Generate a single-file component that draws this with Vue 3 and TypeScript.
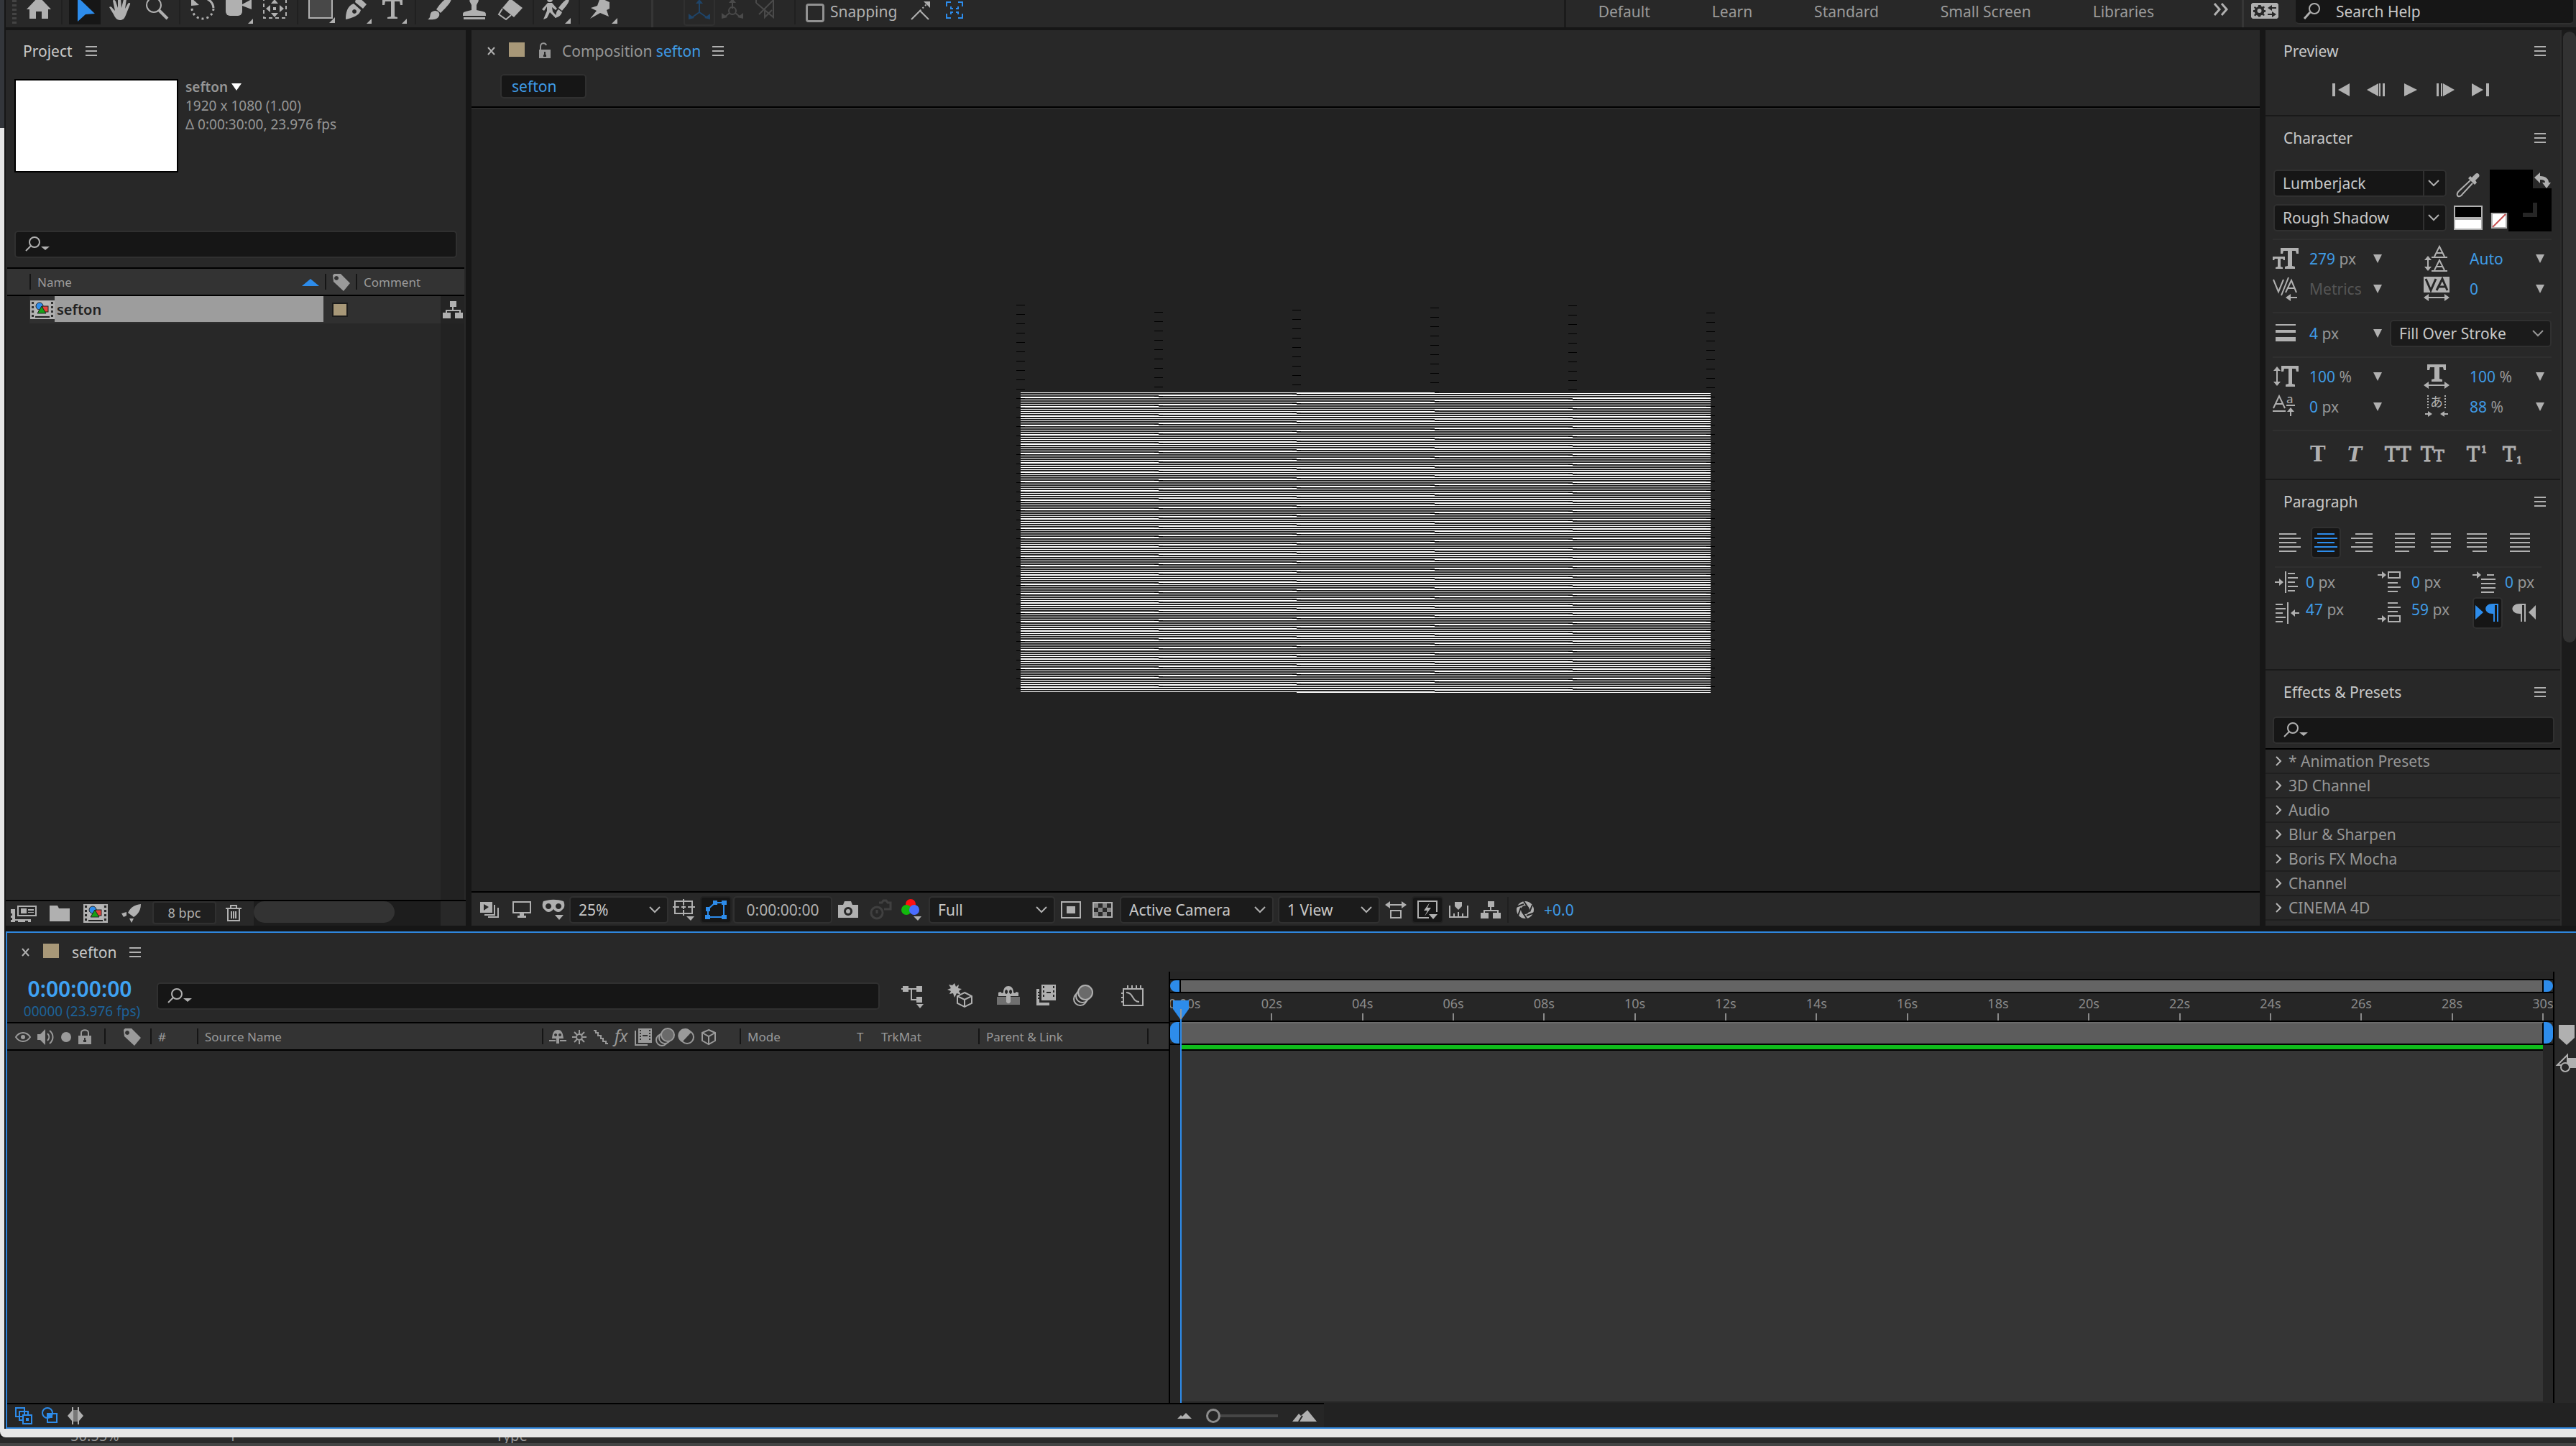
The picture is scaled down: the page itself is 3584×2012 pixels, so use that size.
<script setup lang="ts">
import { h } from 'vue'

type Glyph = [number, number, string]

const S = 'fill="none" stroke="currentColor" stroke-width="2"'
const S3 = 'fill="none" stroke="currentColor" stroke-width="3"'
const serif = 'font-family="DejaVu Serif, serif" font-weight="bold"'
const slab = 'font-family="DejaVu Serif, serif" stroke="currentColor"'
const sans = 'font-family="Noto Sans, sans-serif"'

// Horizontal rules that make up the paragraph alignment glyphs.
const rules = (list: number[][], y0 = 1, step = 6) =>
  list.map(([x, w], i) => `<rect x="${x}" y="${y0 + i * step}" width="${w}" height="2"/>`).join('')

const comp = '<path fill-rule="evenodd" d="M0 0h34v26H0zM2 2v3h3V2zM2 8v3h3V8zM2 14v3h3v-3zM2 20v3h3v-3zM29 2v3h3V2zM29 8v3h3V8zM29 14v3h3v-3zM29 20v3h3v-3z"/><rect x="7" y="1" width="20" height="19" fill="#b8b8b8"/><circle cx="13" cy="8" r="5" fill="#2d8ceb" stroke="#222"/><rect x="17" y="8" width="8" height="8" fill="#e8433c" stroke="#222"/><path d="M16 8l6 10H10z" fill="#18a018" stroke="#222"/><rect x="7" y="22" width="20" height="2" fill="#222"/>'
const film = '<path fill-rule="evenodd" d="M5 0h19v20H5zM7 2v2h2V2zM7 6v2h2V6zM7 10v2h2v-2zM7 14v2h2v-2zM20 2v2h2V2zM20 6v2h2V6zM20 10v2h2v-2zM20 14v2h2v-2zM11 9v2h7V9z"/><path d="M1 3v20h17" fill="none" stroke="currentColor" stroke-width="2"/>'

const glyphs: Record<string, Glyph> = {
  home: [50, 36, '<path d="M25-5 42 13H38V26H29V16H21V26H12V13H8z"/>'],
  arrow: [50, 36, '<path d="M15-4 39 19 26 20 15 30z"/>'],
  hand: [50, 36, '<path d="M9 10c2-2 4 0 5 2l3 3L14 1c1-2 3-1 4 1l3 9 0-13h4l1 13 3-12h4l-2 13 4-7c1-2 4-1 3 1l-6 15c-2 5-4 7-8 7-5 0-7-4-9-8z"/>'],
  zoom: [50, 36, `<circle cx="21" cy="7" r="10" ${S}/><path d="M28 14 40 26" stroke="currentColor" stroke-width="4"/>`],
  rotate: [50, 36, `<path d="M14-2C28-6 39 0 40 11" ${S3}/><path d="M9-3v11l11-1z"/><path d="M40 12A15 15 0 1 1 10 10" ${S3} stroke-dasharray="3 4"/>`],
  camera: [50, 36, `<rect x="7" y="-5" width="23" height="27" rx="6"/><path d="M30 6 43-1V13L30 8z"/><path d="M45 26v7h-7z"/>`],
  anchor: [50, 36, `<path d="M10-4V25H41V-4" ${S} stroke-dasharray="5 4"/><path d="M25 24l-5-6h10zM25-1l-5 6h10zM13 12l6-5v10zM38 12l-6-5v10z"/><rect x="23" y="10" width="4" height="4"/>`],
  rect: [50, 36, '<path d="M9-6h32v31H9z" fill="#484848" stroke="currentColor" stroke-width="2"/><path d="M45 24v8h-8z"/>'],
  pen: [50, 36, `<path fill-rule="evenodd" d="M10 27C10 18 12 8 21 5l10 9c-2 8-12 11-21 13zM22 13a3 3 0 1 0 .1 0z"/><path d="M24-1 28-4 39 6 34 12 23 3z"/><path d="M46 26v7h-7z"/>`],
  type: [50, 36, `<path d="M11-1H39V7H36L35 2H28V23L32 24V26H18V24L23 23V2H15L14 7H11z"/><path d="M45 26v7h-7z"/>`],
  brush: [50, 36, '<path d="M42-3C44 0 42 4 28 18L22 13C31 0 36-3 42-3z"/><path d="M21 15c5 1 6 4 5 7-2 5-9 6-16 5 4-2 3-5 4-8 1-3 4-4 7-4z"/>'],
  stamp: [50, 36, '<path d="M22-4h7l2 5-3 6v7l9 2c4 1 4 2 4 6H9c0-4 0-5 4-6l8-2V7L18 1z"/><rect x="10" y="24" width="30" height="3"/>'],
  eraser: [50, 36, `<path d="M25-2 42 11 30 24 14 11z"/><path d="M14 12 9 20 19 27 26 21" ${S}/>`],
  roto: [50, 36, `<circle cx="16" cy="-1" r="4"/><path d="M13 4h6l7 8-2 2-5-4 1 6 6 7-2 2-8-8-4 8-5 2 5-12V9l-4 6-3-2z"/><path d="M42-2c3 3-3 10-9 17l-5-4c5-7 10-12 14-13zM28 13l5 4c-2 5-5 7-10 8 2-3 1-9 5-12z"/><path d="M45 25v8h-8z"/>`],
  pin: [50, 36, '<path d="M22-3 35 3 35 12 31 14 34 23 22 18 8 26 17 15 9 11 18 8z"/><path d="M46 25v8h-8z"/>'],
  axisA: [30, 36, `<path d="M15 18V4M15 18 5 25M15 18 25 25" ${S}/><path d="M15 0l5 6H10zM0 28v-8l8 6zM30 28v-8l-8 6z"/>`],
  axisB: [30, 36, `<path d="M15 12V0M11 18 5 23M19 18 25 23" ${S}/><circle cx="15" cy="15" r="5" ${S}/><path d="M15-2l5 6H10zM0 26v-8l8 6zM30 26v-8l-8 6z"/>`],
  axisC: [30, 36, `<path d="M2 4 26 24V0L6 20M2 4V-3M14 12v12l10-10" ${S}/>`],
  snap: [30, 36, `<path d="M3 27 15 15 27 27" ${S}/><path d="M15 15 24 6" ${S} stroke-dasharray="2 3"/><path d="M20 2h9v9z"/>`],
  snapBox: [26, 36, `<path d="M2 9V3H8M18 3H24V9M24 19V25H18M8 25H2V19" ${S}/><path d="M8 9v3h3M18 9v3h-3M8 20v-3h3M18 20v-3h-3" ${S}/>`],
  more: [22, 18, `<path d="M2 1l7 8-7 8M12 1l7 8-7 8" ${S3}/>`],
  workspace: [38, 22, '<path fill-rule="evenodd" d="M2 0h34l2 2v18l-2 2H2l-2-2V2zM12 3l-2 0-.5 2.500-2 1L5 5 4 6.500l1.500 2-.7 1.500H3v3h1.800l.7 2L4 17l1.500 1.500 2-1.500 2 1 .5 1.500h3l.5-2 2-.7 1.500 1.200L19 17l-1.500-2 .7-2H20v-3h-1.800l-.7-2L19 6l-1.500-1.500-2 1-1.500-.7L13.500 3zM11.500 8a3 3 0 1 1 0 6 3 3 0 0 1 0-6zM29 3l-6 4 6 4V8h6V6h-6zM29 12v3h-6v2h6v3l6-4z"/>'],
  search: [26, 24, `<circle cx="16" cy="8" r="7" ${S}/><path d="M10 13 2 22" stroke="currentColor" stroke-width="3"/>`],
  find: [34, 22, `<ellipse cx="13" cy="8" rx="7" ry="7" ${S}/><path d="M8 13 1 20" ${S}/><path d="M22 14h12l-6 5z"/>`],
  menu: [16, 14, '<path d="M0 0h16v2H0zM0 6h16v2H0zM0 12h16v2H0z"/>'],
  close: [12, 12, `<path d="M1 1 10 11M10 1 1 11" ${S}/>`],
  unlock: [18, 22, `<path fill-rule="evenodd" d="M2 9h16v12H2zM9 12v4h-1v3h4v-3h-1v-4z"/><path d="M4 9V5c0-6 7-6 8-2" ${S}/>`],
  lock: [20, 22, `<path fill-rule="evenodd" d="M1 9h18v12H1zM9 12v3h-1v3h4v-3h-1v-3z"/><path d="M5 9V5c0-5 10-5 10 0v4" ${S}/>`],
  caret: [14, 10, '<path d="M0 0h14L7 10z"/>'],
  up: [24, 10, '<path d="M12 0 24 10H0z"/>'],
  drop: [14, 12, '<path d="M1 0h12L7 12z"/>'],
  chevron: [16, 10, `<path d="M1 1 8 8 15 1" ${S}/>`],
  twisty: [8, 14, `<path d="M1 1 7 7 1 13" ${S}/>`],
  tag: [24, 24, '<path fill-rule="evenodd" d="M0 2 2 0h9l13 13-9 11L1 11zM5 3a3 3 0 1 0 .1 0z"/>'],
  comp: [34, 26, comp],
  flow: [28, 24, '<path d="M10 0h9v8h-4v4h10v4h3v8H17v-8h6v-2H6v2h5v8H0v-8h4v-4h9V8h-3z"/>'],
  interpret: [36, 24, `<path fill-rule="evenodd" d="M9 1h27v15H9zM11 3v11h23V3zM14 5h8v7h-8zM24 6h8v2h-8zM24 10h8v1h-8z"/><path d="M0 6h6v14h22v4h-4v-2h-4v2H10v-2H6v2H0v-3h2v-3H0v-3h2v-3H0z"/>`],
  folder: [28, 22, '<path d="M0 0h11l2 4h15v18H0z"/>'],
  rocket: [28, 26, '<path d="M27 0c0 9-4 14-10 18L9 12C13 4 18 1 27 0zM7 11 0 13l3 5 4-2zM17 20l-3 6-3-6z"/>'],
  trash: [22, 24, `<path d="M0 5h22M7 4V1h8v3M3 5v17h16V5M8 9v10M11 9v10M14 9v10" ${S}/>`],
  first: [26, 18, '<path d="M0 0h4v18H0zM24 0v18L8 9z"/>'],
  back: [26, 18, '<path d="M16 0v18L0 9zM17 0h2v18h-2zM22 0h3v18h-3z"/>'],
  play: [20, 18, '<path d="M1 0 19 9 1 18z"/>'],
  fwd: [26, 18, '<path d="M10 0v18l16-9zM7 0h2v18H7zM1 0h3v18H1z"/>'],
  last: [26, 18, '<path d="M22 0h4v18h-4zM2 0v18l16-9z"/>'],
  dropper: [34, 34, `<path d="M22 7 27 2c3-3 7 1 5 4l-5 5 2 3-3 3-9-9 3-3z"/><path d="M20 11 5 25c-4 3-4 7-2 8s5-1 6-3L23 15" ${S}/>`],
  size: [36, 30, '<path d="M11 0h25v8h-3l-1-4h-5v21l4 1v3H17v-3l4-1V4h-6l-1 4h-3z"/><path d="M0 12h17v5h-2l-1-2h-3v11l3 1v2H4v-2l3-1V15H3l-1 2H0z"/>'],
  leading: [36, 36, `<path d="M6 17v14M11 16h22M11 35h22M15 15 22 1l7 14M18 10h8M15 34l7-14 7 14M18 29h8" ${S}/><path d="M1 20l5-6 5 6zM1 29l5 6 5-6z"/>`],
  kerning: [36, 34, `<path d="M1 4 8 21 15 4M12 26 22 1M18 22 26 5 33 22M21 16h9M20 29h14" ${S}/><path d="M18 29l7-5v10z"/>`],
  tracking: [36, 34, `<path d="M0 0h36v22H0z"/><path d="M3 3 10 19 17 3M18 19 26 3 33 19M21 14h10" fill="none" stroke="#262626" stroke-width="3"/><path d="M6 29h24" ${S}/><path d="M0 29l7-5v10zM36 29l-7-5v10z"/>`],
  stroke: [36, 26, '<path d="M4 0h28v2H4zM4 8h28v4H4zM4 18h28v6H4z"/>'],
  tall: [36, 30, `<path d="M6 4v20" ${S}/><path d="M1 7l5-6 5 6zM1 22l5 6 5-6z"/><path d="M12 0h24v8h-3l-1-4h-5v21l4 1v3H18v-3l4-1V4h-6l-1 4h-3z"/>`],
  wide: [36, 34, `<path d="M5 0h26v8h-3l-1-4h-5v16l4 1v3H11v-3l4-1V4H9L8 8H5z"/><path d="M7 29h22" ${S}/><path d="M0 29l7-5v10zM36 29l-7-5v10z"/>`],
  shift: [36, 32, `<path d="M1 18 9 1l8 17M4 12h10M0 22h18M19 14h12M25 20v9" ${S}/><path d="M20 23l5-6 5 6z"/><text x="19" y="11" ${sans} font-size="17">a</text>`],
  tsume: [36, 32, `<path d="M6 0v18M30 0v18" ${S} stroke-dasharray="2 2"/><text x="9" y="16" font-family="Noto Sans CJK JP, sans-serif" font-size="18">あ</text><path d="M2 26h8M26 26h8" ${S}/><path d="M12 26l-6-4v8zM23 26l6-4v8z"/>`],
  bold: [50, 36, `<text x="5" y="28" ${serif} font-size="29">T</text>`],
  italic: [50, 36, `<text x="7" y="28" ${serif} font-style="italic" font-size="27">T</text>`],
  caps: [50, 36, `<text x="9" y="28" ${slab} font-size="27">TT</text>`],
  small: [50, 36, `<text x="9" y="28" ${slab} font-size="27">T<tspan font-size="22">T</tspan></text>`],
  sup: [50, 36, `<text x="13" y="28" ${slab} font-size="27">T<tspan font-size="13" dx="2" dy="-12">1</tspan></text>`],
  sub: [50, 36, `<text x="13" y="28" ${slab} font-size="27">T<tspan font-size="13" dx="1" dy="3">1</tspan></text>`],
  alLeft: [32, 28, rules([[1, 24], [1, 30], [1, 24], [1, 30], [1, 24]])],
  alCenter: [32, 28, rules([[4, 24], [0, 32], [4, 24], [0, 32], [4, 24]])],
  alRight: [32, 28, rules([[7, 24], [1, 30], [7, 24], [1, 30], [7, 24]])],
  jLeft: [32, 28, rules([[2, 28], [2, 28], [2, 28], [2, 28], [2, 20]])],
  jCenter: [32, 28, rules([[2, 28], [2, 28], [2, 28], [2, 28], [6, 20]])],
  jRight: [32, 28, rules([[2, 28], [2, 28], [2, 28], [2, 28], [10, 20]])],
  jAll: [32, 28, rules([[2, 28], [2, 28], [2, 28], [2, 28], [2, 28]])],
  inLeft: [34, 30, `<path d="M0 14h6v-4l6 5-6 5v-4H0zM14 0h2v30h-2z"/>${rules([[18, 10], [18, 14], [18, 10], [18, 14], [18, 10]], 2)}`],
  inRight: [34, 30, `<path d="M34 14v2h-6v4l-6-5 6-5v4zM17 0h2v30h-2z"/>${rules([[1, 10], [1, 14], [1, 10], [1, 14], [1, 10]], 2)}`],
  before: [34, 30, `<path d="M0 4h6V0l6 5-6 5V6H0z"/><path d="M15 1h16v8H15z" ${S}/>${rules([[14, 14], [14, 18], [14, 14]], 15)}`],
  after: [34, 30, `<path d="M0 22h6v-4l6 5-6 5v-4H0z"/><path d="M15 19h16v8H15z" ${S}/>${rules([[14, 14], [14, 18], [14, 14]], 0)}`],
  firstLine: [34, 30, `<path d="M0 4h6V0l6 5-6 5V6H0z"/>${rules([[20, 10], [12, 20], [12, 20], [12, 20], [12, 18]], 4)}`],
  ltr: [34, 26, '<path d="M0 2 11 12 0 22zM24 0h8v25h-2V2h-3v23h-2V14h-1C11 14 11 0 24 0z"/>'],
  rtl: [34, 26, '<path d="M34 2 24 12 34 22zM12 0h8v25h-2V2h-3v23h-2V14h-1C-2 14-2 0 12 0z"/>'],
  always: [28, 22, `<path fill-rule="evenodd" d="M0 0h17v15H0zM5 3v9l7-5z"/><path d="M20 4v14H6M25 8v13H11" ${S}/>`],
  monitor: [26, 24, `<path d="M1 1h24v15H1z" ${S}/><path d="M10 17h6v3h3v3H7v-3h3z"/>`],
  mask: [32, 28, `<path fill-rule="evenodd" d="M2 2c9-3 19-3 28 0 2 4 2 10-2 12-3 4-8 4-12-1-4 5-9 5-12 1C0 12 0 6 2 2zM9 5a4 4 0 1 0 .1 0zM23 5a4 4 0 1 0 .1 0z"/><path d="M18 21h12l-6 7z"/>`],
  grid: [32, 30, `<path d="M3 3h24v17H3zM15 0v8M15 15v8M0 11h9M21 11h10M12 11h6M15 9v5" ${S}/><path d="M19 24h11l-5 6z"/>`],
  path: [30, 26, `<path d="M4 23V12L14 3H26V23z" ${S}/><path d="M0 20h7v6H0zM23 20h7v6h-7zM23 0h7v6h-7zM11 0h6v6h-6zM1 9h6v6H1z"/>`],
  photo: [30, 24, '<path fill-rule="evenodd" d="M1 5h7l2-5h9l2 5h8v18H1zM15 8a6 6 0 1 0 .1 0z"/><circle cx="15" cy="14" r="3"/>'],
  showPhoto: [30, 26, `<circle cx="11" cy="17" r="8" ${S3}/><path d="M11 13v5M14 3h4l2-3h4l2 3h4v9h-9" ${S3}/>`],
  rgb: [30, 30, '<circle cx="14" cy="7" r="7" fill="#ff1010"/><circle cx="8" cy="15" r="7" fill="#12b90c"/><circle cx="19" cy="15" r="7" fill="#4a6cff"/><path d="M18 24h11l-5 6z"/>'],
  region: [28, 24, `<path d="M1 1h26v22H1z" ${S}/><path d="M8 7h12v10H8z"/>`],
  checker: [28, 22, `<path d="M1 1h26v20H1z" ${S}/><path d="M2 2h6v6H2zM14 2h6v6h-6zM8 8h6v6H8zM20 8h6v6h-6zM2 14h6v6H2zM14 14h6v6h-6z" fill="#858585"/>`],
  pixel: [30, 24, `<path d="M6 5h18M8 13h14v10H8z" ${S}/><path d="M0 5l7-5v10zM30 5l-7-5v10z"/>`],
  fast: [30, 26, `<path d="M17 24H2V1H28V16" ${S}/><path d="M18 3 10 14h5l-4 8 9-12h-5zM17 19h12l-6 7z"/>`],
  timeline: [28, 22, `<path d="M1 5v16h25V5M7 16v5M13 14v7M19 16v5" ${S}/><path d="M8 0h10v6l-5 5-5-5z"/>`],
  aperture: [28, 26, `<circle cx="14" cy="13" r="9" fill="none" stroke="currentColor" stroke-width="6"/><path d="M12 1l6 9M24 6l-4 10M27 17l-11 4M16 25l-6-9M4 21l4-11M1 9l11-4" stroke="#262626" stroke-width="2"/>`],
  tree: [34, 28, `<path d="M2 5h25M16 5v15h10" ${S}/><path d="M4 1h8v8H4zM23 1h8v8h-8zM23 16h8v8h-8z"/><path d="M23 26h10l-5 6z"/>`],
  draft: [36, 34, `<path d="M10 0l2 5 4-3-1 5 5 1-4 3 3 5-6-2-3 6-2-6-5 1 2-4-5-2 5-2-3-5 5 1z"/><path d="M24 13l10 5v10l-10 5-10-5V18zM14 18l10 5 10-5M24 23v10" ${S}/>`],
  shyBig: [32, 26, `<rect y="15" width="32" height="11" fill="#707070"/><path fill-rule="evenodd" d="M2 9l3-1 2 2 2-1C9 3 12 0 16 0s7 3 7 9l2 1 2-2 3 1v5H19v8c-2 3-4 3-6 0v-8H2zM13 5a2 3 0 1 0 .1 0zM19 5a2 3 0 1 0 .1 0z"/>`],
  blendBig: [30, 30, '<path fill-rule="evenodd" d="M9 0h20v22H9zM11 2v3h2V2zM11 8v3h2V8zM11 14v3h2v-3zM25 2v3h2V2zM25 8v3h2V8zM25 14v3h2v-3zM16 10v2h6v-2z"/><path d="M2 6h4v4H4v2h2v2H4v2h2v2H4v2h2v5h14v4H2z"/>'],
  blur: [30, 30, '<ellipse cx="11" cy="20" rx="9" ry="9" fill="none" stroke="currentColor" stroke-width="2"/><ellipse cx="14" cy="16" rx="9" ry="9" fill="#282828" stroke="currentColor" stroke-width="2"/><circle cx="18" cy="11" r="10" fill="#6a6a6a" stroke="currentColor" stroke-width="2"/>'],
  graph: [32, 30, `<path d="M3 6h27v23H3zM9 1v5M15 1v5M21 1v5M27 1v5M0 12h3M0 18h3M0 24h3M7 11c10 0 8 13 18 13" ${S}/>`],
  eye: [22, 14, `<path d="M1 7C6-1 16-1 21 7 16 15 6 15 1 7z" ${S}/><circle cx="11" cy="7" r="3"/>`],
  audio: [24, 22, `<path d="M0 7h4l7-7v22l-7-7H0z"/><path d="M14 6c3 3 3 7 0 10M17 2c6 5 6 13 0 18" ${S}/>`],
  dot: [14, 14, '<circle cx="7" cy="7" r="7"/>'],
  shy: [26, 20, `<path fill-rule="evenodd" d="M5 12C6 3 8 0 13 0s7 3 8 12h-6v7h-4v-7zM10 5a2 2 0 1 0 .1 0zM16 5a2 2 0 1 0 .1 0z"/><path d="M1 14h9v2H1zM16 14h9v2h-9z"/>`],
  sun: [22, 20, `<circle cx="11" cy="10" r="4" ${S}/><path d="M11 0v5M11 15v5M1 10h5M16 10h5M4 3l4 4M14 13l4 4M18 3l-4 4M8 13l-4 4" ${S}/>`],
  slash: [22, 20, `<path d="M1 1h3v3h3v4h4v4h3v4h4v3h3" ${S}/>`],
  fx: [24, 34, `<text x="1" y="24" ${sans} font-style="italic" font-size="23">fx</text>`],
  film: [26, 24, film],
  blurS: [28, 26, '<ellipse cx="9" cy="17" rx="8" ry="8" fill="none" stroke="currentColor" stroke-width="2"/><ellipse cx="13" cy="14" rx="8" ry="8" fill="#323232" stroke="currentColor" stroke-width="2"/><circle cx="17" cy="10" r="9" fill="#6a6a6a" stroke="currentColor" stroke-width="2"/>'],
  half: [22, 22, `<circle cx="11" cy="11" r="9" ${S}/><path d="M17 4A10 10 0 1 0 4 18z"/>`],
  cube: [22, 22, `<path d="M11 1l9 4v11l-9 5-9-5V5zM2 5l9 5 9-5M11 10v11" ${S}/>`],
  marker: [22, 28, '<path d="M0 0h22v18L11 28 0 18z"/>'],
  shapes: [30, 26, `<path d="M2 15 16 1v14z" ${S}/><path d="M17 5h13v14H17z"/><circle cx="13" cy="18" r="6" fill="#262626" stroke="currentColor" stroke-width="2"/>`],
  togA: [24, 24, `<path d="M1 1h12v12H1zM6 6h12v12H6z" ${S}/><path d="M11 11h12v12H11z" fill="#262626" stroke="currentColor" stroke-width="2"/><path d="M15 15h4v4h-4z"/>`],
  togB: [24, 24, `<circle cx="9" cy="8" r="7" ${S}/><path d="M9 9h13v12H9z" ${S}/><path d="M10 10h6v5h-6z"/>`],
  togC: [24, 24, '<path d="M7 0h2v24H7zM15 0h2v24h-2z"/><path d="M9 4h6v16H9z" fill="#777"/><path d="M7 5v14l-6-7zM17 5v14l6-7z"/>'],
  hillS: [20, 8, '<path d="M0 8l5-5 2 2 5-5 8 8z"/>'],
  hillL: [34, 16, '<path d="M0 16 9 5l3 3L21 0l13 16z"/><path d="M9 16l5-8" stroke="#262626" stroke-width="2"/>'],
}

const Icon = (props: { name: string }) => {
  const [w, ht, body] = glyphs[props.name]
  return h('svg', {
    width: w,
    height: ht,
    viewBox: `0 0 ${w} ${ht}`,
    fill: 'currentColor',
    'aria-hidden': 'true',
    innerHTML: body,
  })
}
Icon.props = ['name']

const toolGroups: string[][] = [
  ['home'],
  ['arrow', 'hand', 'zoom'],
  ['rotate', 'camera', 'anchor'],
  ['rect', 'pen', 'type'],
  ['brush', 'stamp', 'eraser'],
  ['roto'],
  ['pin'],
]
const workspaces = ['Default', 'Learn', 'Standard', 'Small Screen', 'Libraries']
const transport = ['first', 'back', 'play', 'fwd', 'last']
const typeStyles = ['bold', 'italic', 'caps', 'small', 'sup', 'sub']
const aligns = ['alLeft', 'alCenter', 'alRight', 'jLeft', 'jCenter', 'jRight', 'jAll']
const effects = ['* Animation Presets', '3D Channel', 'Audio', 'Blur & Sharpen', 'Boris FX Mocha', 'Channel', 'CINEMA 4D', 'Color Correction']
const switches = ['shy', 'sun', 'slash', 'fx', 'film', 'blurS', 'half', 'cube']
const timelineTools = ['tree', 'draft', 'shyBig', 'blendBig', 'blur', 'graph']
const seconds = Array.from({ length: 16 }, (_, i) => (i ? `${String(i * 2).padStart(2, '0')}s` : '00:00s'))

// Each artboard column repeats a 13px stripe motif, offset by its own phase.
const columns = [4, 14, 11, 8, 5, 15].map((phase, i) => ({ phase, x: i * 192 }))
</script>

<template>
  <div class="desk">
    <main class="window">
      <header class="toolbar">
        <span class="grip"></span>
        <template v-for="(group, g) in toolGroups" :key="g">
          <button v-for="t in group" :key="t" type="button" class="tool" :class="{ on: t === 'arrow' }" :aria-label="t"><Icon :name="t" /></button>
          <span v-if="g < toolGroups.length - 1" class="rule"></span>
        </template>
        <span class="rule strong"></span>
        <button type="button" class="axis boxed" aria-label="Local axis"><Icon name="axisA" /></button>
        <button type="button" class="axis" aria-label="World axis"><Icon name="axisB" /></button>
        <button type="button" class="axis" aria-label="View axis"><Icon name="axisC" /></button>
        <span class="rule"></span>
        <label class="snapping"><input type="checkbox" /><span>Snapping</span></label>
        <button type="button" class="snap" aria-label="Snap edges"><Icon name="snap" /></button>
        <button type="button" class="snap blue" aria-label="Snap features"><Icon name="snapBox" /></button>
        <nav class="spaces">
          <a v-for="w in workspaces" :key="w" href="#">{{ w }}</a>
          <button type="button" aria-label="More workspaces"><Icon name="more" /></button>
        </nav>
        <div class="helpers">
          <button type="button" aria-label="Workspace settings"><Icon name="workspace" /></button>
          <label class="help"><Icon name="search" /><input type="text" placeholder="Search Help" /></label>
        </div>
      </header>

      <div class="panels">
        <section class="panel project">
          <h2 class="tab">Project <button type="button" aria-label="Project menu"><Icon name="menu" /></button></h2>
          <div class="summary">
            <div class="thumb"></div>
            <div class="info">
              <strong>sefton <Icon name="caret" /></strong>
              <span>1920 x 1080 (1.00)</span>
              <span>Δ 0:00:30:00, 23.976 fps</span>
            </div>
          </div>
          <label class="field"><Icon name="find" /><input type="text" aria-label="Search project" /></label>
          <table class="items">
            <colgroup><col class="c-icon" /><col class="c-name" /><col class="c-label" /><col class="c-comment" /><col class="c-flow" /></colgroup>
            <thead>
              <tr>
                <th></th>
                <th class="split"><div class="sorted">Name <Icon name="up" /></div></th>
                <th class="split mid"><Icon name="tag" /></th>
                <th class="split" colspan="2">Comment</th>
              </tr>
            </thead>
            <tbody>
              <tr>
                <td class="kind"><Icon name="comp" /></td>
                <td class="name">sefton</td>
                <td><span class="swatch"></span></td>
                <td></td>
                <td class="link"><Icon name="flow" /></td>
              </tr>
            </tbody>
          </table>
          <div class="listspace"></div>
          <footer class="projectbar">
            <button type="button" aria-label="Interpret footage"><Icon name="interpret" /></button>
            <button type="button" aria-label="New folder"><Icon name="folder" /></button>
            <button type="button" aria-label="New composition"><Icon name="comp" /></button>
            <button type="button" aria-label="Project settings"><Icon name="rocket" /></button>
            <button type="button" class="depth">8 bpc</button>
            <button type="button" aria-label="Delete"><Icon name="trash" /></button>
            <div class="hscroll"><span></span></div>
          </footer>
        </section>

        <section class="panel viewer">
          <h2 class="tab comptab">
            <button type="button" aria-label="Close"><Icon name="close" /></button>
            <span class="swatch flat"></span>
            <Icon name="unlock" />
            <span>Composition <b>sefton</b></span>
            <button type="button" aria-label="Composition menu"><Icon name="menu" /></button>
          </h2>
          <div class="crumbs"><a href="#">sefton</a></div>
          <div class="stage">
            <svg class="art" viewBox="0 0 960 544" width="960" height="544" shape-rendering="crispEdges">
              <defs>
                <pattern v-for="c in columns" :id="`stripe${c.x}`" :key="c.x" x="0" :y="c.phase" width="13" height="13" patternUnits="userSpaceOnUse">
                  <path d="M0 2h13v1H0zM0 5h13v1H0zM0 8h13v1H0zM0 11h13v2H0z" fill="#fff" />
                </pattern>
                <pattern v-for="c in columns" :id="`tick${c.x}`" :key="c.x" x="0" :y="c.phase" width="13" height="13" patternUnits="userSpaceOnUse">
                  <path d="M0 0h13v1H0z" fill="#000" />
                </pattern>
              </defs>
              <rect v-for="c in columns.slice(0, 5)" :key="c.x" :x="c.x" y="126" width="192" height="418" :fill="`url(#stripe${c.x})`" />
              <rect v-for="c in columns" :key="c.x" :x="c.x - 6" :y="c.phase" width="12" :height="540 - c.phase" :fill="`url(#tick${c.x})`" />
            </svg>
          </div>
          <footer class="viewbar">
            <button type="button" aria-label="Always preview"><Icon name="always" /></button>
            <button type="button" aria-label="Primary viewer"><Icon name="monitor" /></button>
            <button type="button" aria-label="View options"><Icon name="mask" /></button>
            <span class="pick zoomlevel"><select aria-label="Magnification"><option>25%</option></select><Icon name="chevron" /></span>
            <button type="button" aria-label="Guides"><Icon name="grid" /></button>
            <button type="button" class="on" aria-label="Mask visibility"><Icon name="path" /></button>
            <button type="button" class="clock">0:00:00:00</button>
            <button type="button" aria-label="Snapshot"><Icon name="photo" /></button>
            <button type="button" class="dim" aria-label="Show snapshot"><Icon name="showPhoto" /></button>
            <button type="button" aria-label="Channels"><Icon name="rgb" /></button>
            <span class="pick resolution"><select aria-label="Resolution"><option>Full</option></select><Icon name="chevron" /></span>
            <button type="button" aria-label="Region of interest"><Icon name="region" /></button>
            <button type="button" aria-label="Transparency grid"><Icon name="checker" /></button>
            <span class="pick cameraview"><select aria-label="3D view"><option>Active Camera</option></select><Icon name="chevron" /></span>
            <span class="pick viewcount"><select aria-label="View layout"><option>1 View</option></select><Icon name="chevron" /></span>
            <button type="button" aria-label="Pixel aspect"><Icon name="pixel" /></button>
            <button type="button" class="dark" aria-label="Fast previews"><Icon name="fast" /></button>
            <button type="button" aria-label="Timeline"><Icon name="timeline" /></button>
            <button type="button" aria-label="Flowchart"><Icon name="flow" /></button>
            <span class="vrule"></span>
            <button type="button" aria-label="Reset exposure"><Icon name="aperture" /></button>
            <span class="exposure">+0.0</span>
          </footer>
        </section>

        <aside class="side">
          <div class="stack">
            <section class="panel preview">
              <h2 class="tab wide">Preview <button type="button" aria-label="Preview menu"><Icon name="menu" /></button></h2>
              <div class="transport"><button v-for="t in transport" :key="t" type="button" :aria-label="t"><Icon :name="t" /></button></div>
            </section>

            <section class="panel character">
              <h2 class="tab wide">Character <button type="button" aria-label="Character menu"><Icon name="menu" /></button></h2>
              <div class="fontrow">
                <div class="fonts">
                  <span class="pick font"><select aria-label="Font family"><option>Lumberjack</option></select><Icon name="chevron" /></span>
                  <span class="pick font"><select aria-label="Font style"><option>Rough Shadow</option></select><Icon name="chevron" /></span>
                </div>
                <div class="mono"><Icon name="dropper" /><span class="bw"></span></div>
                <svg class="paints" width="88" height="88" viewBox="0 0 88 88">
                  <rect x="26" y="26" width="60" height="60" fill="#000" />
                  <rect width="60" height="60" fill="#000" />
                  <path d="M60 46h6v20H46v-6h14z" fill="#262626" />
                  <rect x="3" y="61" width="20" height="20" fill="#fff" stroke="#b0b0b0" stroke-width="2" />
                  <path d="M4 80 22 62" stroke="#c85050" stroke-width="2" />
                  <path d="M62 11 70 4v5c8 0 12 4 12 9h3l-6 8-6-8h4c0-3-2-4-7-4v5z" fill="#b0b0b0" />
                </svg>
              </div>
              <div class="block two">
                <div class="metrics">
                  <Icon name="size" /><span><b>279</b> px</span><Icon name="drop" />
                  <Icon name="leading" /><span><b>Auto</b></span><Icon name="drop" />
                </div>
                <div class="metrics">
                  <Icon name="kerning" /><span class="off">Metrics</span><Icon name="drop" />
                  <Icon name="tracking" /><span><b>0</b></span><Icon name="drop" />
                </div>
              </div>
              <div class="block strokeblock">
                <div class="strokes">
                  <Icon name="stroke" /><span><b>4</b> px</span><Icon name="drop" />
                  <span class="pick over"><select aria-label="Stroke order"><option>Fill Over Stroke</option></select><Icon name="chevron" /></span>
                </div>
              </div>
              <div class="block two">
                <div class="metrics">
                  <Icon name="tall" /><span><b>100</b> %</span><Icon name="drop" />
                  <Icon name="wide" /><span><b>100</b> %</span><Icon name="drop" />
                </div>
                <div class="metrics">
                  <Icon name="shift" /><span><b>0</b> px</span><Icon name="drop" />
                  <Icon name="tsume" /><span><b>88</b> %</span><Icon name="drop" />
                </div>
              </div>
              <div class="block styles"><button v-for="t in typeStyles" :key="t" type="button" :aria-label="t"><Icon :name="t" /></button></div>
            </section>

            <section class="panel paragraph">
              <h2 class="tab wide">Paragraph <button type="button" aria-label="Paragraph menu"><Icon name="menu" /></button></h2>
              <div class="aligns"><button v-for="a in aligns" :key="a" type="button" :class="[a, { on: a === 'alCenter' }]" :aria-label="a"><Icon :name="a" /></button></div>
              <div class="indents">
                <Icon name="inLeft" /><span><b>0</b> px</span>
                <Icon name="before" /><span><b>0</b> px</span>
                <Icon name="firstLine" /><span><b>0</b> px</span>
                <Icon name="inRight" /><span class="low"><b>47</b> px</span>
                <Icon name="after" /><span class="low"><b>59</b> px</span>
                <div class="direction">
                  <button type="button" class="on" aria-label="Left to right"><Icon name="ltr" /></button>
                  <button type="button" aria-label="Right to left"><Icon name="rtl" /></button>
                </div>
              </div>
            </section>

            <section class="panel effects">
              <h2 class="tab wide">Effects &amp; Presets <button type="button" aria-label="Effects menu"><Icon name="menu" /></button></h2>
              <label class="field"><Icon name="find" /><input type="text" aria-label="Search effects" /></label>
              <ul>
                <li v-for="e in effects" :key="e"><Icon name="twisty" />{{ e }}</li>
              </ul>
            </section>
          </div>
          <div class="vscroll"><span></span></div>
        </aside>
      </div>

      <section class="timeline">
        <h2 class="tab comptab">
          <button type="button" aria-label="Close"><Icon name="close" /></button>
          <span class="swatch flat"></span>
          <span class="title">sefton</span>
          <button type="button" aria-label="Timeline menu"><Icon name="menu" /></button>
        </h2>
        <div class="tracks">
          <div class="layers">
            <div class="controls">
              <div class="time"><strong>0:00:00:00</strong><span>00000 (23.976 fps)</span></div>
              <label class="field"><Icon name="find" /><input type="text" aria-label="Search layers" /></label>
              <div class="modes"><button v-for="t in timelineTools" :key="t" type="button" :aria-label="t"><Icon :name="t" /></button></div>
            </div>
            <table class="layerhead">
              <colgroup><col class="l-av" /><col class="l-tag" /><col class="l-num" /><col class="l-name" /><col class="l-sw" /><col class="l-mode" /><col class="l-t" /><col class="l-trk" /><col class="l-parent" /><col /></colgroup>
              <thead>
                <tr>
                  <th><div class="av"><Icon name="eye" /><Icon name="audio" /><Icon name="dot" /><Icon name="lock" /></div></th>
                  <th class="split tagcell"><Icon name="tag" /></th>
                  <th class="split">#</th>
                  <th class="split">Source Name</th>
                  <th class="split"><div class="switches"><span v-for="s in switches" :key="s"><Icon :name="s" /></span></div></th>
                  <th class="split">Mode</th>
                  <th>T</th>
                  <th>TrkMat</th>
                  <th class="split">Parent &amp; Link</th>
                  <th class="split"></th>
                </tr>
              </thead>
            </table>
          </div>
          <div class="graph">
            <div class="navigator"><i></i><span></span><i class="end"></i></div>
            <div class="ruler"><span v-for="s in seconds" :key="s"><em>{{ s }}</em></span></div>
            <div class="workarea"><i></i><span></span><i class="end"></i></div>
            <div class="cache"></div>
            <div class="lane"></div>
            <svg class="head" width="24" height="26" viewBox="0 0 24 26"><path d="M1 0h22v12L13 26h-2L1 12z" fill="#2d8ceb" /><path d="M12 12v14" stroke="#999" stroke-width="2" /></svg>
            <span class="playhead"></span>
          </div>
          <div class="gutter"><Icon name="marker" /><Icon name="shapes" /></div>
        </div>
        <footer class="timebar">
          <div class="toggles">
            <button type="button" class="blue" aria-label="Layer switches"><Icon name="togA" /></button>
            <button type="button" class="blue" aria-label="Transfer controls"><Icon name="togB" /></button>
            <button type="button" aria-label="In and out"><Icon name="togC" /></button>
          </div>
          <div class="scale"><Icon name="hillS" /><input type="range" min="0" max="100" value="0" aria-label="Timeline zoom" /><Icon name="hillL" /></div>
        </footer>
      </section>
    </main>
    <div class="behind"><span>50.55%</span><span>1</span><span>Type</span></div>
  </div>
</template>

<style>
body {
  margin: 0;
  background: #2a2a2a;
}
</style>

<style scoped>
* {
  box-sizing: border-box;
}
.desk {
  display: flex;
  flex-direction: column;
  height: 100vh;
  overflow: hidden;
  background: #1a1a1a;
  color: #b0b0b0;
  font: 21px/28px "Noto Sans", sans-serif;
}
svg {
  display: block;
  flex: none;
  overflow: visible;
}
button {
  display: flex;
  align-items: center;
  justify-content: center;
  flex: none;
  margin: 0;
  padding: 0;
  border: 0;
  background: none;
  color: inherit;
  font: inherit;
}
input[type="text"] {
  flex: 1;
  min-width: 0;
  padding: 0;
  border: 0;
  outline: 0;
  background: none;
  color: #c8c8c8;
  font: inherit;
}
a {
  color: inherit;
  text-decoration: none;
}
b {
  color: #3f9be6;
  font-weight: 400;
}
.blue {
  color: #2d8ceb;
}
.window {
  flex: 1;
  min-height: 0;
  display: grid;
  grid-template-rows: 38px minmax(0, 1fr) 692px;
  padding-left: 8px;
  padding-bottom: 12px;
  background: linear-gradient(#161616, #161616) 6px 0 / 2px calc(100% - 12px) no-repeat, linear-gradient(#33363b 178px, #e6e6e6 178px);
  border-bottom-left-radius: 8px;
}
.toolbar,
.panels,
.timeline {
  min-width: 0;
}

/* toolbar */
.toolbar {
  display: flex;
  background: #282828;
  overflow: hidden;
  line-height: 32px;
}
.grip {
  width: 21px;
  flex: none;
  background: repeating-linear-gradient(#444 0 3px, transparent 3px 6px) 9px 0 / 6px 33px no-repeat;
}
.tool {
  width: 50px;
  height: 36px;
}
.tool.on {
  color: #2d8ceb;
  background: linear-gradient(#161616, #161616) center top / 44px 34px no-repeat;
}
.rule {
  flex: none;
  width: 14px;
  height: 34px;
  background: linear-gradient(#202020, #202020) center / 2px 100% no-repeat;
}
.rule.strong {
  width: 88px;
  height: 38px;
  background-image: linear-gradient(#363636, #363636);
  background-size: 3px 100%;
}
.axis {
  width: 44px;
  height: 36px;
  color: #4a4a4a;
  margin-right: 2px;
}
.axis.boxed {
  color: #1f4468;
  border: 2px solid #303030;
  border-top: 0;
  border-radius: 0 0 4px 4px;
}
.axis + .rule {
  margin-left: 10px;
}
.snapping {
  display: flex;
  align-items: center;
  gap: 8px;
  height: 32px;
  margin: 0 8px 0 8px;
}
.snapping input {
  appearance: none;
  width: 26px;
  height: 26px;
  margin: 4px 0 0;
  border: 3px solid #929292;
  border-radius: 4px;
}
.snap {
  width: 48px;
  height: 36px;
}
.spaces {
  display: flex;
  gap: 86px;
  margin-left: auto;
  padding: 0 18px 0 45px;
  border-left: 3px solid #1b1b1b;
  color: #9a9a9a;
}
.spaces button {
  height: 26px;
  margin-left: -4px;
  color: #b0b0b0;
}
.helpers {
  display: flex;
  align-items: flex-start;
  gap: 24px;
  padding: 0 4px 0 10px;
  border-left: 3px solid #363636;
}
.helpers > button {
  height: 30px;
}
.help {
  display: flex;
  align-items: center;
  gap: 20px;
  width: 386px;
  height: 34px;
  padding: 0 10px 0;
  background: #161616;
  border-bottom: 2px solid #303030;
  border-radius: 0 0 5px 5px;
}
.help input::placeholder {
  color: #c8c8c8;
  opacity: 1;
}

/* panels */
.panels {
  display: grid;
  grid-template-columns: 640px minmax(0, 1fr) 432px;
  gap: 8px;
  padding: 4px 0 8px;
  background: #161616;
}
.panel {
  display: flex;
  flex-direction: column;
  min-height: 0;
  min-width: 0;
  background: #282828;
}
.tab {
  display: flex;
  align-items: center;
  gap: 18px;
  flex: none;
  height: 58px;
  margin: 0;
  padding-left: 24px;
  color: #c8c8c8;
  font-size: 21px;
  font-weight: 400;
}
.tab.wide {
  height: 60px;
  justify-content: space-between;
  padding: 0 20px 0 25px;
}
.tab button {
  color: #b0b0b0;
}
.comptab {
  color: #969696;
  padding-left: 22px;
}
.swatch {
  display: block;
  width: 22px;
  height: 20px;
  border: 2px solid #1c1c1c;
  background: #a89878;
}
.swatch.flat {
  border: 0;
  margin-bottom: 5px;
}
.field {
  display: flex;
  align-items: center;
  flex: none;
  height: 38px;
  padding: 0 13px;
  border: 2px solid #303030;
  border-radius: 5px;
  background: #161616;
}

/* project */
.summary {
  display: flex;
  gap: 12px;
  height: 221px;
  padding: 10px 0 0 12px;
  color: #969696;
  font-size: 19px;
  line-height: 26px;
}
.thumb {
  width: 228px;
  height: 130px;
  border: 2px solid #000;
  background: #fff;
}
.info {
  display: flex;
  flex-direction: column;
  margin: -2px 0 0 -2px;
}
.info strong {
  display: flex;
  align-items: center;
  gap: 5px;
  font-weight: 600;
}
.info svg {
  color: #fff;
}
.project .field {
  margin: 0 12px 13px;
}
.items,
.layerhead {
  width: calc(100% - 2px);
  table-layout: fixed;
  border-collapse: separate;
  border-spacing: 0;
  font-size: 17px;
  line-height: 24px;
}
.items {
  margin-left: 2px;
  width: calc(100% - 4px);
}
th {
  height: 40px;
  padding: 2px 0 0 11px;
  border-top: 2px solid #000;
  border-bottom: 2px solid #000;
  background: #333;
  color: #9a9a9a;
  font-weight: 400;
  text-align: left;
  white-space: nowrap;
}
th.split {
  background: linear-gradient(#151515, #151515) 0 center / 2px 22px no-repeat, #333;
}
.c-icon {
  width: 31px;
}
.c-name {
  width: 411px;
}
.c-label {
  width: 43px;
}
.c-flow {
  width: 33px;
}
.sorted {
  display: flex;
  justify-content: space-between;
  align-items: center;
  padding-right: 8px;
}
.sorted svg {
  color: #2d8ceb;
}
.items td {
  height: 38px;
  padding: 0;
  background: #303030;
}
.kind svg {
  margin-left: 32px;
  margin-right: -34px;
  position: relative;
}
.items .kind {
  background: #282828;
}
.items td.name {
  padding-left: 38px;
  background: linear-gradient(#9d9d9d, #9d9d9d) 35px 0 / 374px 36px no-repeat #303030;
  color: #222;
  font-size: 20px;
  font-weight: 600;
}
.items td .swatch {
  margin-left: 10px;
}
.items td.link {
  padding-left: 3px;
  background: #242424;
}
.listspace {
  flex: 1;
  margin-right: 2px;
  background: linear-gradient(#222, #222) right / 33px 100% no-repeat;
}
.projectbar {
  display: flex;
  flex: none;
  height: 36px;
  border-top: 2px solid #000;
}
.projectbar button {
  width: 50px;
}
.projectbar .depth {
  width: 89px;
  margin: 0 4px;
  height: 32px;
  border: 2px solid #303030;
  border-radius: 4px;
  background: #1f1f1f;
  font-size: 18px;
}
.projectbar .depth + button {
  width: 48px;
  margin-left: -4px;
}
.hscroll {
  width: 260px;
  margin-left: 4px;
  background: #1d1d1d;
}
.hscroll span {
  display: block;
  width: 196px;
  height: 30px;
  border-radius: 15px;
  background: #333;
}

/* viewer */
.viewer .comptab > span:nth-of-type(2) {
  margin: 0 -2px 0 -2px;
}
.crumbs {
  height: 50px;
  padding: 3px 0 0 40px;
  border-bottom: 2px solid #000;
}
.crumbs a {
  display: block;
  width: 120px;
  padding: 1px 14px;
  border: 2px solid #303030;
  border-radius: 5px;
  background: #161616;
  color: #3f9be6;
}
.stage {
  flex: 1;
  min-height: 0;
  display: flex;
  justify-content: center;
  padding-top: 268px;
  background: #222;
  border-top: 2px solid #2c2c2c;
}
.viewbar {
  display: flex;
  align-items: center;
  flex: none;
  height: 48px;
  padding: 1px 0 0 4px;
  border-top: 2px solid #000;
}
.viewbar > button {
  width: 44px;
  height: 38px;
}
.on,
.viewbar .on {
  color: #2d8ceb;
}
.viewbar .on,
.viewbar .dark {
  border: 2px solid #222;
  border-radius: 5px;
  background: #161616;
}
.viewbar .dim {
  color: #404040;
}
.pick {
  display: grid;
  align-items: center;
  flex: none;
  height: 38px;
  border: 2px solid #303030;
  border-radius: 5px;
  background: #1b1b1b;
}
.pick > * {
  grid-area: 1 / 1;
}
.pick svg {
  justify-self: end;
  margin-right: 9px;
  pointer-events: none;
}
.pick select {
  appearance: none;
  width: 100%;
  height: 34px;
  padding: 0 11px;
  border: 0;
  background: none;
  color: #c8c8c8;
  font: inherit;
}
.zoomlevel {
  width: 138px;
}
.viewbar > button.clock {
  width: 138px;
  margin: 0 0 0 2px;
  border: 2px solid #303030;
  border-radius: 5px;
  background: #1f1f1f;
}
.resolution {
  width: 176px;
  margin-left: 2px;
}
.cameraview {
  width: 214px;
  margin: 0 6px 0 2px;
}
.viewcount {
  width: 142px;
}
.vrule {
  width: 2px;
  height: 36px;
  margin: 0 1px;
  background: #1f1f1f;
}
.exposure {
  margin-left: 4px;
  color: #3f9be6;
}

/* right column */
.side {
  display: flex;
  min-height: 0;
}
.stack {
  flex: 1;
  display: flex;
  flex-direction: column;
  min-height: 0;
  min-width: 0;
  overflow: hidden;
  border-right: 2px solid #2c2c2c;
}
.vscroll {
  width: 20px;
  padding: 2px 0 0 2px;
  background: #1b1b1b;
}
.vscroll span {
  display: block;
  height: 850px;
  border-radius: 9px;
  background: #323232;
}
.stack .panel {
  flex: none;
}
.stack .panel + .panel {
  border-top: 2px solid #191919;
}
.preview {
  height: 118px;
}
.preview .tab {
  margin-top: -1px;
}
.transport {
  display: flex;
  height: 48px;
  padding-left: 82px;
}
.transport button {
  width: 48px;
}
.character {
  height: 506px;
}
.fontrow {
  display: flex;
  gap: 10px;
  height: 110px;
  padding: 14px 10px 0 11px;
}
.fonts {
  display: flex;
  flex-direction: column;
  gap: 10px;
  width: 246px;
}
.pick.font {
  background: linear-gradient(#303030, #303030) 206px 0 / 2px 100% no-repeat, #161616;
}
.pick.font svg {
  margin-right: 8px;
}
.mono {
  width: 40px;
  display: flex;
  flex-direction: column;
  align-items: center;
  gap: 12px;
  padding-top: 4px;
}
.bw {
  width: 40px;
  height: 34px;
  border: 2px solid #b0b0b0;
  background: linear-gradient(#000 14px, #b0b0b0 14px 18px, #fff 18px);
}
.block {
  display: flex;
  flex-direction: column;
  justify-content: center;
  flex: none;
  margin: 0 12px 0 10px;
  padding-bottom: 6px;
  border-top: 2px solid #2f2f2f;
  color: #969696;
}
.block.two {
  height: 102px;
}
.strokeblock {
  height: 62px;
  padding-bottom: 4px;
}
.metrics,
.strokes {
  display: grid;
  grid-template-columns: 51px 88px 71px 64px 91px 1fr;
  align-items: center;
  height: 42px;
}
.strokes {
  grid-template-columns: 51px 88px 24px 1fr;
}
.metrics svg,
.strokes > svg {
  color: #b0b0b0;
}
.off {
  color: #555;
}
.block.styles {
  flex-direction: row;
  justify-content: flex-start;
  align-items: center;
  height: 66px;
  padding: 0 0 0 47px;
  color: #b0b0b0;
}
.styles button {
  width: 50px;
}
.styles button:nth-child(5) {
  margin-left: 10px;
}
.paragraph {
  height: 265px;
}
.aligns {
  display: flex;
  gap: 8px;
  padding: 5px 0 0 13px;
}
.aligns button {
  width: 42px;
  height: 44px;
}
.aligns .jLeft {
  margin-left: 10px;
}
.aligns .jAll {
  margin-left: 10px;
}
.aligns .on,
.direction .on {
  border: 2px solid #303030;
  border-radius: 5px;
  background: #161616;
}
.indents {
  display: grid;
  grid-template-columns: 43px 100px 47px 85px 45px 1fr;
  grid-template-rows: 40px 46px;
  align-items: center;
  margin: 11px 26px 0 13px;
  border-top: 2px solid #2f2f2f;
  color: #969696;
}
.indents > svg {
  color: #b0b0b0;
}
.low {
  padding-bottom: 10px;
}
.direction {
  display: flex;
  gap: 8px;
  grid-column: 5 / 7;
  color: #b0b0b0;
}
.direction button {
  width: 42px;
  height: 44px;
}
.direction .on {
  color: #2d8ceb;
}
.effects .field {
  margin: 4px 8px 6px 10px;
}
.stack .effects {
  flex: 1;
  overflow: hidden;
}
ul {
  margin: 0;
  padding: 0;
  border-top: 2px solid #000;
  list-style: none;
}
li {
  display: flex;
  align-items: center;
  gap: 10px;
  height: 34px;
  padding-left: 14px;
  border-bottom: 2px solid #1f1f1f;
  color: #969696;
}
li svg {
  color: #b8b8b8;
}

/* timeline */
.timeline {
  display: flex;
  flex-direction: column;
  border: solid #2f86dd;
  border-width: 2px 0 2px 2px;
  background: #282828;
}
.timeline > .tab {
  height: 54px;
  padding-left: 20px;
}
.timeline .title {
  color: #c8c8c8;
}
.tracks {
  flex: 1;
  min-height: 0;
  display: grid;
  grid-template-columns: 1616px minmax(0, 1fr) 30px;
}
.controls {
  display: flex;
  height: 70px;
  padding-left: 20px;
}
.time {
  display: flex;
  flex-direction: column;
  align-items: center;
  width: 168px;
  margin: 4px 20px 0 0;
  font-size: 19px;
  line-height: 22px;
  color: #1d6299;
  white-space: nowrap;
}
.time strong {
  padding-right: 6px;
  font-size: 30px;
  line-height: 40px;
  font-weight: 600;
  color: #3fa2f2;
}
.controls .field {
  width: 1006px;
  margin-top: 15px;
}
.modes {
  display: flex;
  gap: 21px;
  padding: 0 0 4px 27px;
}
.modes button {
  width: 36px;
}
.modes button:nth-child(n + 2) {
  margin-left: 10px;
}
.modes button:nth-child(n + 4) {
  margin-left: -5px;
}
.modes button:nth-child(6) {
  margin-left: 12px;
}
.layerhead {
  width: 100%;
}
.l-av {
  width: 135px;
}
.l-tag {
  width: 64px;
}
.l-num {
  width: 65px;
}
.l-name {
  width: 480px;
}
.l-sw {
  width: 275px;
}
.l-mode {
  width: 152px;
}
.l-t {
  width: 34px;
}
.l-trk {
  width: 146px;
}
.l-parent {
  width: 235px;
}
.av {
  display: flex;
  align-items: center;
  gap: 9px;
}
.tagcell {
  padding-left: 27px;
}
.switches {
  display: flex;
  margin-left: -4px;
}
.switches span {
  display: flex;
  align-items: center;
  justify-content: center;
  width: 30px;
}
.graph {
  position: relative;
  display: flex;
  flex-direction: column;
  overflow: hidden;
  border: solid #000;
  border-width: 0 2px;
  background: #262626;
}
.navigator,
.workarea {
  display: flex;
  flex: none;
  border: solid #000;
  border-width: 2px 0;
}
.navigator {
  height: 20px;
  margin-top: 10px;
}
.navigator span,
.workarea span {
  flex: 1;
  background: #646464;
  border: solid #000;
  border-width: 0 2px;
}
.workarea {
  height: 34px;
}
.workarea span {
  background: #5c5c5c;
  border-top: 2px solid #6c6c6c;
}
.navigator i,
.workarea i {
  width: 13px;
  border-radius: 9px 0 0 9px;
  background: #2d8ceb;
}
.navigator i.end,
.workarea i.end {
  border-radius: 0 9px 9px 0;
}
.ruler {
  display: flex;
  justify-content: space-between;
  flex: none;
  height: 38px;
  padding: 0 14px 0 15px;
}
.ruler span {
  display: flex;
  justify-content: center;
  width: 0;
  color: #8a8a8a;
  font-size: 18px;
}
.ruler em {
  display: block;
  height: 38px;
  font-style: normal;
  background: linear-gradient(#8a8a8a, #8a8a8a) center bottom / 2px 10px no-repeat;
}
.cache {
  flex: none;
  height: 8px;
  margin: 0 14px 0 15px;
  border-bottom: 2px solid #000;
  background: #10bc1c;
}
.lane {
  flex: 1;
  margin: 0 14px 2px;
  background: #353535;
}
.head {
  position: absolute;
  left: 3px;
  top: 40px;
}
.playhead {
  position: absolute;
  left: 14px;
  top: 66px;
  bottom: 0;
  width: 2px;
  background: #2d8ceb;
}
.gutter {
  display: flex;
  flex-direction: column;
  align-items: center;
  gap: 13px;
  padding: 74px 0 0 3px;
}
.timebar {
  display: flex;
  flex: none;
  height: 34px;
  background: linear-gradient(#000, #000) 0 0 / 1832px 2px no-repeat, linear-gradient(90deg, #262626 1832px, #222 1832px);
}
.toggles {
  display: flex;
  gap: 12px;
  width: 1628px;
  padding: 2px 0 0 11px;
}
.scale {
  display: flex;
  align-items: center;
  gap: 20px;
  padding-top: 1px;
}
.scale input {
  appearance: none;
  width: 100px;
  height: 20px;
  margin: 0;
  background: linear-gradient(90deg, transparent 16px, #464646 16px) center / 100% 4px no-repeat;
}
.scale input::-webkit-slider-thumb {
  appearance: none;
  width: 20px;
  height: 20px;
  border: 3px solid #8c8c8c;
  border-radius: 50%;
  background: #262626;
}
.behind {
  display: flex;
  align-items: flex-end;
  flex: none;
  height: 12px;
  overflow: hidden;
  padding-left: 98px;
  background: #2a2a2a;
  border-bottom: 4px solid #444;
  color: #969696;
  font-size: 20px;
  line-height: 20px;
}
.behind span:nth-child(2) {
  margin-left: 152px;
}
.behind span:nth-child(3) {
  margin-left: 360px;
}
</style>
